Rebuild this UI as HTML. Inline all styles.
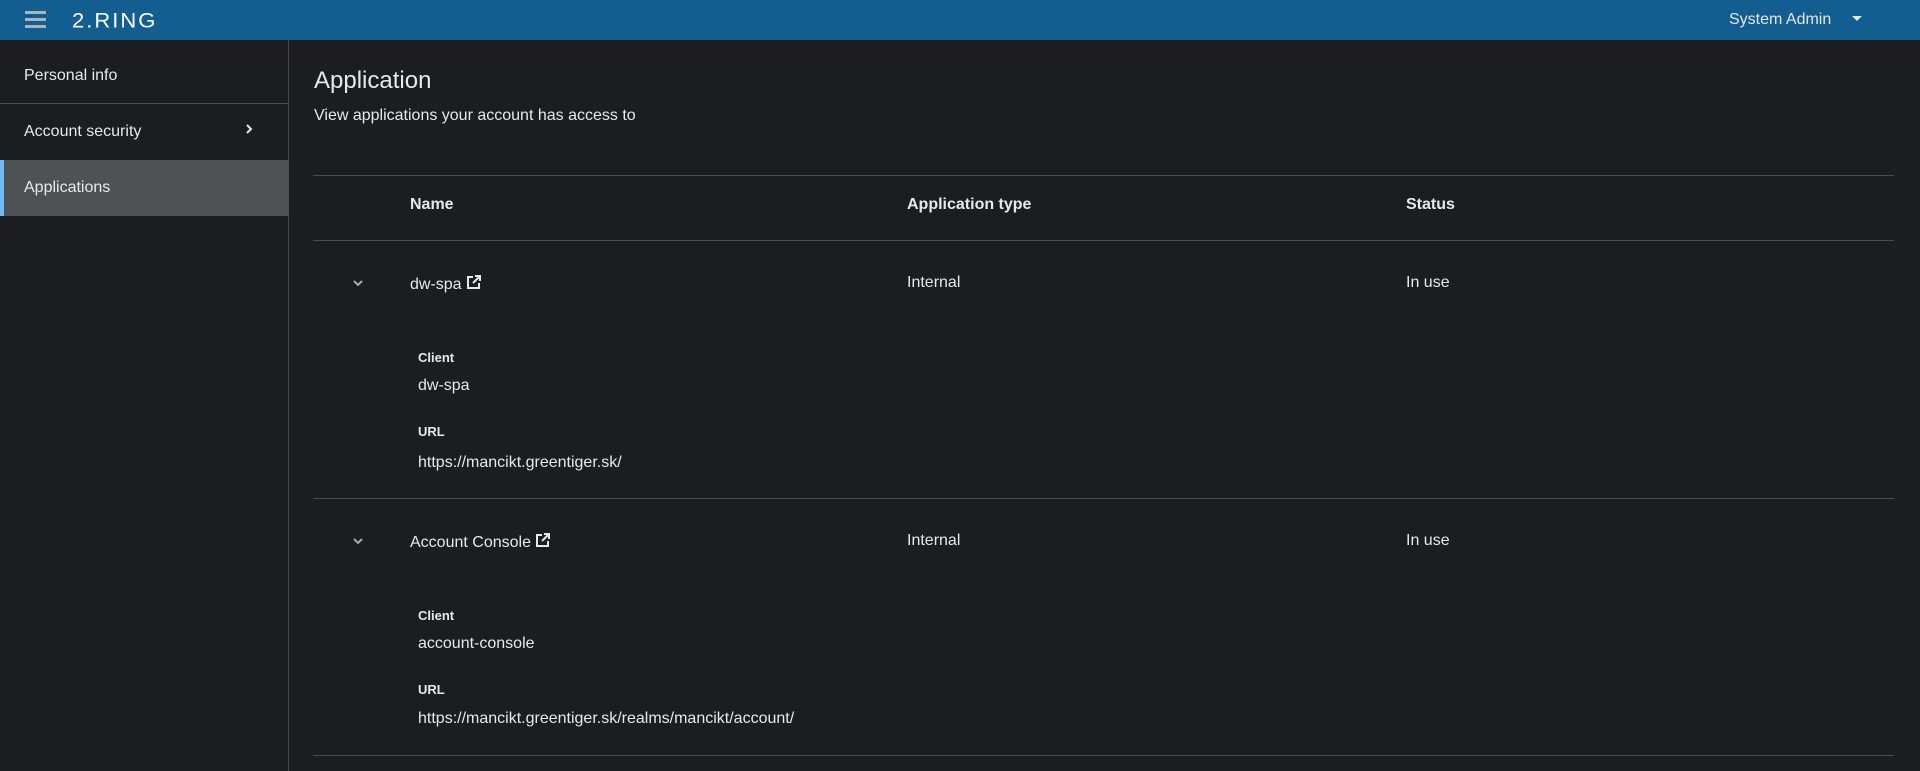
<!DOCTYPE html>
<html><head><style>
*{margin:0;padding:0;box-sizing:border-box}
body{width:1920px;height:771px;background:#1b1d21;font-family:"Liberation Sans",sans-serif;color:#e8e8e8;position:relative;overflow:hidden}
.hdr{position:absolute;left:0;top:0;width:1920px;height:40px;background:#135e91}
.side{position:absolute;left:0;top:40px;width:289px;height:731px;border-right:1px solid #444548}
.abs{position:absolute;white-space:nowrap}
.ln{position:absolute;left:313px;width:1581px;height:1px;background:#4a4b4e}
.f16{font-size:16px}
.b{font-weight:bold}
</style></head><body>
<div class="hdr">
 <div class="abs" style="left:25px;top:11px;width:21px;height:3px;background:#aab4bd;box-shadow:0 7px 0 #aab4bd,0 14px 0 #aab4bd"></div>
 <div class="abs" style="left:72px;top:8px;font-size:22px;color:#fff;letter-spacing:2px;transform:scaleY(0.95)">2.RING</div>
 <div class="abs f16" style="left:1729px;top:11px;color:#e6e6e6">System Admin</div>
 <div class="abs" style="left:1852px;top:16px;width:0;height:0;border-left:5px solid transparent;border-right:5px solid transparent;border-top:5px solid #e6e6e6"></div>
</div>
<div class="side">
 <div class="abs f16" style="left:24px;top:27px">Personal info</div>
 <div class="abs" style="left:0;top:63px;width:289px;height:1px;background:#4a4b4e"></div>
 <div class="abs f16" style="left:24px;top:83px">Account security</div>
 <svg class="abs" style="left:245px;top:83px" width="8" height="12" viewBox="0 0 8 12"><path d="M2 2l4 4-4 4" fill="none" stroke="#e8e8e8" stroke-width="2"/></svg>
 <div class="abs" style="left:0;top:120px;width:289px;height:56px;background:#4f5255"></div>
 <div class="abs" style="left:0;top:120px;width:4px;height:56px;background:#73bcf7"></div>
 <div class="abs f16" style="left:24px;top:139px">Applications</div>
</div>
<div class="abs" style="left:314px;top:67px;font-size:24px">Application</div>
<div class="abs f16" style="left:314px;top:107px">View applications your account has access to</div>
<div class="ln" style="top:175px"></div>
<div class="abs f16 b" style="left:410px;top:196px">Name</div>
<div class="abs f16 b" style="left:907px;top:196px">Application type</div>
<div class="abs f16 b" style="left:1406px;top:196px">Status</div>
<div class="ln" style="top:240px"></div>

<svg class="abs" style="left:352px;top:279px" width="12" height="8" viewBox="0 0 12 8"><path d="M2 2l4 4 4-4" fill="none" stroke="#aaa" stroke-width="2"/></svg>
<div class="abs f16" style="left:410px;top:274px">dw-spa <svg width="16" height="16" viewBox="0 0 16 16" style="vertical-align:-1px"><path d="M7 3H2v11h11V9" fill="none" stroke="#e8e8e8" stroke-width="2"/><path d="M9 2h5v5M14 2L7 9" fill="none" stroke="#e8e8e8" stroke-width="2"/></svg></div>
<div class="abs f16" style="left:907px;top:274px">Internal</div>
<div class="abs f16" style="left:1406px;top:274px">In use</div>
<div class="abs b" style="left:418px;top:350px;font-size:13px">Client</div>
<div class="abs f16" style="left:418px;top:377px">dw-spa</div>
<div class="abs b" style="left:418px;top:424px;font-size:13px">URL</div>
<div class="abs f16" style="left:418px;top:454px">https://mancikt.greentiger.sk/</div>
<div class="ln" style="top:498px"></div>

<svg class="abs" style="left:352px;top:537px" width="12" height="8" viewBox="0 0 12 8"><path d="M2 2l4 4 4-4" fill="none" stroke="#aaa" stroke-width="2"/></svg>
<div class="abs f16" style="left:410px;top:532px">Account Console <svg width="16" height="16" viewBox="0 0 16 16" style="vertical-align:-1px"><path d="M7 3H2v11h11V9" fill="none" stroke="#e8e8e8" stroke-width="2"/><path d="M9 2h5v5M14 2L7 9" fill="none" stroke="#e8e8e8" stroke-width="2"/></svg></div>
<div class="abs f16" style="left:907px;top:532px">Internal</div>
<div class="abs f16" style="left:1406px;top:532px">In use</div>
<div class="abs b" style="left:418px;top:608px;font-size:13px">Client</div>
<div class="abs f16" style="left:418px;top:635px">account-console</div>
<div class="abs b" style="left:418px;top:682px;font-size:13px">URL</div>
<div class="abs f16" style="left:418px;top:710px">https://mancikt.greentiger.sk/realms/mancikt/account/</div>
<div class="ln" style="top:755px"></div>
</body></html>
